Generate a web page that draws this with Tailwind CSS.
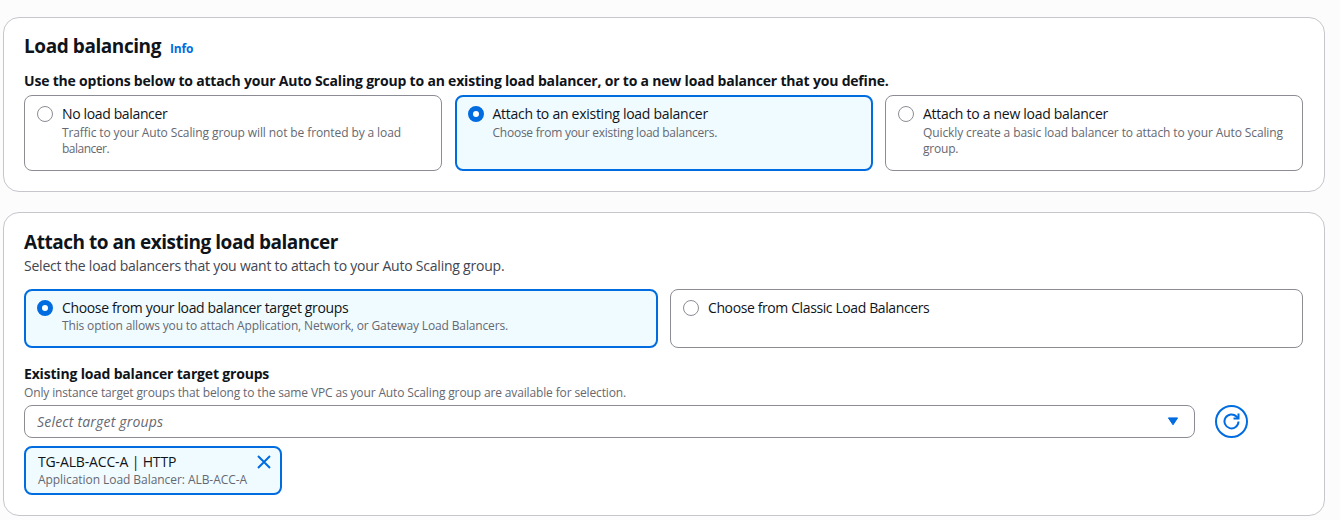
<!DOCTYPE html>
<html lang="en">
<head>
<meta charset="utf-8">
<title>Load balancing</title>
<script src="https://cdn.jsdelivr.net/npm/@tailwindcss/browser@4"></script>
</head>
<body class="h-[520px] overflow-hidden bg-[#fcfcfd] font-['Open_Sans',sans-serif] text-sm leading-5 text-[#0f141a]">
<main class="flex w-[1325px] flex-col gap-5 pt-[17px] pl-[3px] whitespace-nowrap">
  <section class="h-[175px] rounded-2xl border border-[#c6c6cd] bg-white px-5 pt-4">
    <div class="flex h-6 items-baseline gap-[9px]">
      <h1 class="text-[19px] leading-6 font-bold tracking-[-0.43px]">Load balancing</h1>
      <a class="text-xs leading-4 font-bold tracking-[-0.15px] text-[#006ce0]">Info</a>
    </div>
    <p class="mt-[13px] font-bold tracking-[-0.195px]">Use the options below to attach your Auto Scaling group to an existing load balancer, or to a new load balancer that you define.</p>
    <div class="mt-1 flex h-[76px] w-[1279px] justify-between">
      <div class="flex w-[418px] gap-[9px] rounded-lg border border-[#8c8c94] pt-2 pl-3">
        <span class="mt-[2px] size-4 shrink-0 rounded-full border border-[#8c8c94]"></span>
        <div>
          <p class="tracking-[-0.36px]">No load balancer</p>
          <p class="mt-px text-xs leading-4 text-[#656871]"><span class="tracking-[-0.104px]">Traffic to your Auto Scaling group will not be fronted by a load</span><br><span class="tracking-[-0.5px]">balancer.</span></p>
        </div>
      </div>
      <div class="flex w-[418px] gap-[9px] rounded-lg border-2 border-[#006ce0] bg-[#f0fbff] pt-[7px] pl-[11px]">
        <span class="mt-[2px] size-4 shrink-0 rounded-full border-[5px] border-[#006ce0] bg-white"></span>
        <div>
          <p class="tracking-[-0.27px]">Attach to an existing load balancer</p>
          <p class="mt-px text-xs leading-4 tracking-[-0.245px] text-[#656871]">Choose from your existing load balancers.</p>
        </div>
      </div>
      <div class="flex w-[418px] gap-[9px] rounded-lg border border-[#8c8c94] pt-2 pl-3">
        <span class="mt-[2px] size-4 shrink-0 rounded-full border border-[#8c8c94]"></span>
        <div>
          <p class="tracking-[-0.29px]">Attach to a new load balancer</p>
          <p class="mt-px text-xs leading-4 text-[#656871]"><span class="tracking-[-0.104px]">Quickly create a basic load balancer to attach to your Auto Scaling</span><br><span class="tracking-[-0.2px]">group.</span></p>
        </div>
      </div>
    </div>
  </section>

  <section class="h-[304px] rounded-2xl border border-[#c6c6cd] bg-white px-5 pt-[17px]">
    <h2 class="text-[19px] leading-6 font-bold tracking-[-0.477px]">Attach to an existing load balancer</h2>
    <p class="mt-[2px] tracking-[-0.225px] text-[#424650]">Select the load balancers that you want to attach to your Auto Scaling group.</p>
    <div class="mt-[13px] flex h-[59px] w-[1279px] justify-between">
      <div class="flex w-[634px] gap-[9px] rounded-lg border-2 border-[#006ce0] bg-[#f0fbff] pt-[7px] pl-[11px]">
        <span class="mt-[2px] size-4 shrink-0 rounded-full border-[5px] border-[#006ce0] bg-white"></span>
        <div>
          <p class="tracking-[-0.345px]">Choose from your load balancer target groups</p>
          <p class="text-xs leading-4 tracking-[-0.146px] text-[#656871]">This option allows you to attach Application, Network, or Gateway Load Balancers.</p>
        </div>
      </div>
      <div class="flex w-[633px] gap-[9px] rounded-lg border border-[#8c8c94] pt-2 pl-3">
        <span class="mt-[2px] size-4 shrink-0 rounded-full border border-[#8c8c94]"></span>
        <p class="tracking-[-0.39px]">Choose from Classic Load Balancers</p>
      </div>
    </div>
    <p class="mt-4 font-bold tracking-[-0.18px]">Existing load balancer target groups</p>
    <p class="mt-px text-xs leading-4 tracking-[-0.137px] text-[#656871]">Only instance target groups that belong to the same VPC as your Auto Scaling group are available for selection.</p>
    <div class="mt-1 flex gap-5">
      <div class="flex h-[33px] w-[1171px] items-center justify-between rounded-lg border border-[#8c8c94] pr-[15px] pl-3">
        <span class="tracking-[0.19px] text-[#656871] italic">Select target groups</span>
        <svg class="h-[9px] w-3" viewBox="0 0 12 9"><path d="M1.4 .9h9.2L6 7.8z" fill="#006ce0" stroke="#006ce0" stroke-linejoin="round"/></svg>
      </div>
      <button class="flex size-[33px] items-center justify-center rounded-full border-2 border-[#006ce0]">
        <svg class="size-[17px]" viewBox="0 0 17 17" fill="none" stroke="#006ce0" stroke-width="2"><path d="M15.5 8.5a7 7 0 1 1-2-5l2 2"/><path d="M15.5 .5v5h-5"/></svg>
      </button>
    </div>
    <div class="mt-2 flex h-[49px] w-[258px] justify-between rounded-lg border-2 border-[#006ce0] bg-[#f0fbff] pt-1 pr-2 pl-3">
      <div>
        <p class="tracking-[-0.15px]">TG-ALB-ACC-A | HTTP</p>
        <p class="text-xs leading-4 tracking-[-0.059px] text-[#656871]">Application Load Balancer: ALB-ACC-A</p>
      </div>
      <svg class="mt-[2px] size-4" viewBox="0 0 16 16" fill="none" stroke="#006ce0" stroke-width="2"><path d="M2 2l12 12M14 2L2 14"/></svg>
    </div>
  </section>
</main>
</body>
</html>
